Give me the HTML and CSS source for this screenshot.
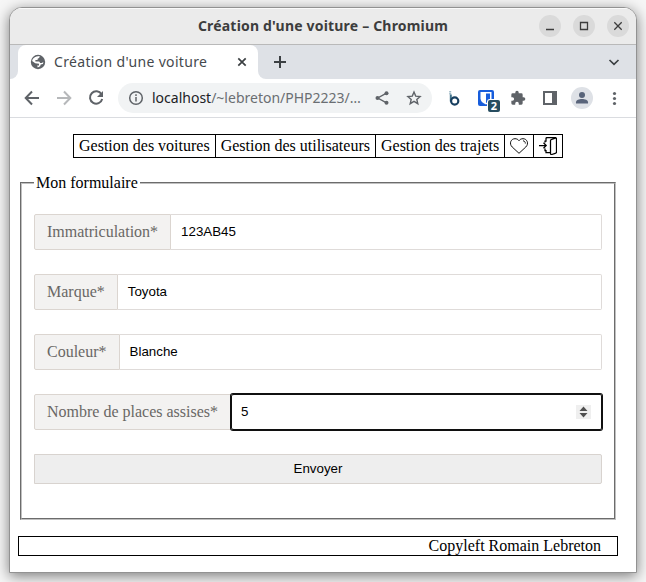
FILE: index.html
```html
<!DOCTYPE html>
<html lang="fr">
<head>
<meta charset="utf-8">
<title>Création d'une voiture</title>
<link rel="stylesheet" href="styles.css">
</head>
<body>
<div class="window">
  <header class="titlebar">
    <span class="title">Création d'une voiture – Chromium</span>
    <div class="controls">
      <span class="control"><svg width="22" height="22" viewBox="0 0 22 22"><path d="M7 14.500h8"/></svg></span>
      <span class="control"><svg width="22" height="22" viewBox="0 0 22 22"><path d="M7.500 7.500h7v7h-7z"/></svg></span>
      <span class="control"><svg width="22" height="22" viewBox="0 0 22 22"><path d="M7.300 7.300l7.400 7.400M14.700 7.300l-7.400 7.400"/></svg></span>
    </div>
  </header>
  <div class="tabstrip">
    <div class="tab-edge left"></div>
    <div class="tab">
      <svg class="globe" width="16" height="16" viewBox="0 0 16 16"><circle cx="8" cy="8" r="7.200" fill="#5f6368"/><path d="M6.500 2.500L9.600 2c0 1.500-.4 2.300-1.800 2.500L7.500 6H5.400v1.600h3.800l1 1.500h1.600l1.600-1-.5 2-2.200.5-.6 1.700-2.400 1.300-.5-2.100H9V9.700L5.300 9.300 2.100 7.100c.3-2.200 2-4 4.400-4.600z" fill="#fff"/></svg>
      <span class="tab-title">Création d'une voiture</span>
      <svg class="tab-close" width="16" height="16" viewBox="0 0 16 16"><path d="M4.300 4.300l7.400 7.400M11.700 4.300l-7.400 7.400"/></svg>
    </div>
    <div class="tab-edge right"></div>
    <svg class="new-tab" width="16" height="16" viewBox="0 0 16 16"><path d="M8 2v12M2 8h12"/></svg>
    <svg class="tab-menu" width="16" height="16" viewBox="0 0 16 16"><path d="M3.500 6L8 10.300 12.500 6"/></svg>
  </div>
  <div class="toolbar">
    <span class="tool"><svg width="20" height="20" viewBox="0 0 20 20"><path class="line" d="M17 10H4M10 3.500L3.700 10l6.300 6.500"/></svg></span>
    <span class="tool off"><svg width="20" height="20" viewBox="0 0 20 20"><path class="line" d="M3 10h13M10 3.500l6.300 6.500-6.300 6.500"/></svg></span>
    <span class="tool"><svg width="20" height="20" viewBox="0 0 20 20"><path class="line" d="M15.500 6.300A6.200 6.200 0 1 0 16.200 11"/><path d="M17 3v6h-6z"/></svg></span>
    <div class="address">
      <svg class="info" width="16" height="16" viewBox="0 0 16 16"><circle cx="8" cy="8" r="6.300"/><path d="M8 7v4.500M8 4.200v1.800"/></svg>
      <span class="url"><b>localhost</b>/~lebreton/PHP2223/…</span>
      <span class="tool"><svg width="16" height="16" viewBox="0 0 16 16"><path class="thin" d="M12.500 3.200L3.800 8l8.700 4.800"/><circle cx="12.500" cy="3.200" r="2"/><circle cx="3.500" cy="8" r="2"/><circle cx="12.500" cy="12.800" r="2"/></svg></span>
      <span class="tool star"><svg width="16" height="16" viewBox="0 0 16 16"><path class="thin" d="M8 2l1.700 4.100 4.400.4-3.300 2.900 1 4.300L8 11.400l-3.800 2.300 1-4.300-3.300-2.900 4.400-.4z"/></svg></span>
    </div>
    <span class="tool"><svg width="16" height="16" viewBox="0 0 16 16"><path d="M4.200 1v4" fill="none" stroke="#9fbac6" stroke-width="2" stroke-dasharray="1.500 .5"/><path d="M4.800 4.500v7" fill="none" stroke="#3f7189" stroke-width="2"/><circle cx="8.700" cy="11" r="3.600" fill="none" stroke="#183f60" stroke-width="2.200"/></svg></span>
    <span class="tool extension"><svg width="16" height="16" viewBox="0 0 16 16"><rect width="16" height="16" rx="2" fill="#175ddc"/><path d="M2.500 2h11v6.500c0 2.700-2 4.500-5.500 6-3.500-1.500-5.500-3.300-5.500-6z" fill="#fff"/><path d="M3.800 3.300H7v9.300c-2.200-1.200-3.200-2.400-3.200-4.100z" fill="#fff"/><path d="M8 3.500h4v5c0 1.900-1.500 3.200-4 4.500z" fill="#175ddc"/></svg><i class="badge">2</i></span>
    <span class="tool"><svg width="16" height="16" viewBox="0 0 24 24"><path d="M20.500 11H19V7a2 2 0 0 0-2-2h-4V3.500a2.500 2.500 0 0 0-5 0V5H4a2 2 0 0 0-2 2v3.800h1.500a2.700 2.700 0 0 1 0 5.400H2V20a2 2 0 0 0 2 2h3.800v-1.500a2.700 2.700 0 0 1 5.400 0V22H17a2 2 0 0 0 2-2v-4h1.500a2.500 2.500 0 0 0 0-5z"/></svg></span>
    <span class="tool"><svg width="14" height="14" viewBox="0 0 14 14"><path d="M0 0h14v14H0zM2 2v10h7V2z" fill-rule="evenodd"/></svg></span>
    <span class="tool"><svg width="22" height="22" viewBox="0 0 22 22"><circle cx="11" cy="11" r="11" fill="#dee1e6"/><circle cx="11" cy="8" r="3" fill="#59647a"/><path d="M5 16.500v-1.300c0-2 3-3.200 6-3.200s6 1.200 6 3.200v1.300z" fill="#59647a"/></svg></span>
    <span class="tool"><svg width="16" height="16" viewBox="0 0 16 16"><circle cx="8.500" cy="3.500" r="1.600"/><circle cx="8.500" cy="8.500" r="1.600"/><circle cx="8.500" cy="13.500" r="1.600"/></svg></span>
  </div>
  <main class="page">
    <nav class="menu">
      <a>Gestion des voitures</a>
      <a>Gestion des utilisateurs</a>
      <a>Gestion des trajets</a>
      <a><svg width="18" height="18" viewBox="0 0 18 18"><path d="M9 16.300L2.200 10C-1.300 6.500 1 1.700 5 1.700c1.800 0 3 .7 4 2 1-1.300 2.200-2 4-2 4 0 6.300 4.800 2.800 8.300z"/><path d="M13 3.800c1.500.1 2.400 1.200 2.300 2.700"/></svg></a>
      <a><svg class="door" width="18" height="18" viewBox="0 0 18 18"><path d="M0 8.500h7M4.500 5.800L7.200 8.500l-2.700 2.700M6 5.500V4h1V1.500Q7 .5 8.500.5h7.300q1.700 0 1.700 1.500v13q0 1-1.300 1.300l-3.500 1.200q-1.200.2-1.200-1.200V3.600q0-1 1.200-1.300L17 1M6 11.500v2h1v2h4.500"/></svg></a>
    </nav>
    <form>
      <fieldset>
        <legend>Mon formulaire</legend>
        <div class="field"><label>Immatriculation*</label><div class="value">123AB45</div></div>
        <div class="field"><label>Marque*</label><div class="value">Toyota</div></div>
        <div class="field"><label>Couleur*</label><div class="value">Blanche</div></div>
        <div class="field"><label>Nombre de places assises*</label><div class="value focused">5<svg class="spinner" width="15" height="14" viewBox="0 0 15 14"><path d="M3.500 6l4-4.500 4 4.500zM3.500 8l4 4.500 4-4.500z"/></svg></div></div>
        <button class="submit" type="button">Envoyer</button>
      </fieldset>
    </form>
    <footer>Copyleft Romain Lebreton</footer>
  </main>
</div>
</body>
</html>
```
FILE: styles.css
```css
* { box-sizing: border-box; }
body { margin: 0; height: 582px; padding: 7px 9px 9px; overflow: hidden; background: #f6f6f6; }
svg { display: block; flex: none; }
.window {
  width: 628px;
  height: 566px;
  border: 1px solid #929292;
  border-radius: 13px 13px 0 0;
  overflow: hidden;
  background: #fff;
  box-shadow: 0 3px 14px rgba(0, 0, 0, .5);
}
.titlebar {
  position: relative;
  height: 37px;
  display: flex;
  align-items: center;
  justify-content: center;
  background: #ebebeb;
  border-bottom: 1px solid #b9b9b9;
  box-shadow: inset 0 1px #fafafa;
}
.title { font: bold 14px/20px "Noto Sans", sans-serif; letter-spacing: .19px; color: #3d3d3d; white-space: nowrap; }
.controls { position: absolute; right: 7px; top: 7px; display: flex; gap: 12px; }
.control { border-radius: 50%; background: #dadada; }
.control path { fill: none; stroke: #3d3d3d; stroke-width: 1.300; }
.tabstrip { height: 34px; display: flex; align-items: center; background: #dee1e6; }
.tab-edge { width: 8px; height: 34px; background: #fff; flex: none; }
.tab-edge::before { content: ""; display: block; height: 34px; background: #dee1e6; }
.left::before { border-bottom-right-radius: 8px; }
.right::before { border-bottom-left-radius: 8px; }
.tab {
  width: 240px;
  height: 34px;
  padding: 0 8px 0 12px;
  display: flex;
  align-items: center;
  background: #fff;
  border-radius: 8px 8px 0 0;
}
.tab-title { margin-left: 8px; flex: 1; font: 14px/20px "Noto Sans", sans-serif; letter-spacing: .33px; color: #45494d; white-space: nowrap; }
.tab-close, .new-tab, .tab-menu { fill: none; stroke: #3c4043; stroke-width: 1.700; }
.new-tab { margin-left: 6px; stroke-width: 2; }
.tab-menu { margin-left: auto; margin-right: 14px; }
.toolbar { height: 39px; padding: 0 6px; display: flex; align-items: center; border-bottom: 1px solid #dadce0; }
.tool { width: 32px; height: 30px; display: flex; align-items: center; justify-content: center; fill: #5f6368; stroke: none; flex: none; }
.tool .line { fill: none; stroke: #5f6368; stroke-width: 2; }
.tool .thin { fill: none; stroke: #5f6368; stroke-width: 1.400; }
.off { opacity: .45; }
.address { width: 314px; height: 30px; margin: 0 6px; padding: 0 2px 0 10px; display: flex; align-items: center; border-radius: 15px; background: #f1f3f4; }
.info { fill: none; stroke: #5f6368; stroke-width: 1.500; }
.url { margin-left: 8px; flex: 1; font: 14px/20px "Noto Sans", sans-serif; color: #6a6e72; white-space: nowrap; }
.url b { font-weight: normal; color: #202124; }
.extension { position: relative; }
.badge { position: absolute; left: 18px; top: 17px; width: 12px; height: 12px; border-radius: 2px; background: #274d60; color: #fff; font: bold 11px/12px "Noto Sans", sans-serif; text-align: center; box-shadow: 0 0 0 1px #fff; }
.page { padding: 16px 18px 0 8px; font: 16px/18px "Liberation Serif", serif; color: #000; }
.menu { width: 490px; height: 24px; margin-left: 55px; display: flex; border: 1px solid #000; }
.menu a { padding: 2px 5px 0; border-right: 1px solid #000; white-space: nowrap; }
.menu a:last-child { border-right: 0; }
.menu path { fill: none; stroke: #111; stroke-width: 1; }
.menu .door path { stroke: #000; stroke-width: 1.250; }
form { display: block; }
fieldset { width: 596px; height: 346px; margin: 16px 0 0 2px; padding: 22px 12px 0; border: 2px groove #c0c0c0; }
legend { padding: 0 2px; }
.field { height: 36px; margin-bottom: 24px; display: flex; }
.field label { padding: 8px 12px 0; background: #f3f2f1; border: 1px solid #dbd5d0; border-radius: 2px 0 0 2px; color: #696765; white-space: nowrap; }
.value { flex: 1; padding: 0 10px; display: flex; align-items: center; border: 1px solid #dfdbd9; border-left: 0; border-radius: 0 2px 2px 0; font: 13.333px/16px "Liberation Sans", sans-serif; }
.focused { justify-content: space-between; border-radius: 2px; border-color: #101010; box-shadow: 0 0 0 1px #101010, inset 1px 0 #101010; }
.spinner { background: #efefef; }
.spinner path { fill: #505050; }
.submit { display: block; width: 100%; height: 30px; padding: 0; border: 1px solid #d8d3cf; border-radius: 0 2px 2px 0; background: #eee; color: #000; font: 13.333px/16px "Liberation Sans", sans-serif; }
footer { width: 600px; height: 20px; margin-top: 16px; padding-right: 16px; border: 1px solid #000; text-align: right; }
```
